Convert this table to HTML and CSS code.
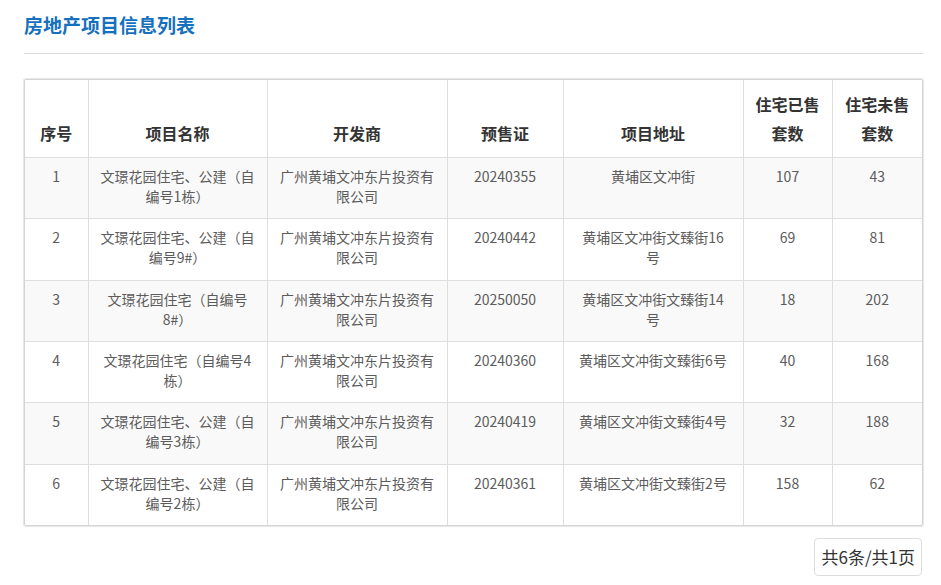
FILE: index.html
```html
<!DOCTYPE html>
<html lang="zh-CN">
<head>
<meta charset="utf-8">
<title>房地产项目信息列表</title>
<link rel="stylesheet" href="styles.css">
</head>
<body>
<div class="page">
  <h1 class="title">房地产项目信息列表</h1>
  <div class="rule"></div>
  <div class="table-wrap">
    <table class="grid">
      <colgroup>
        <col class="c1"><col class="c2"><col class="c3"><col class="c4"><col class="c5"><col class="c6"><col class="c7">
      </colgroup>
      <thead>
        <tr>
          <th>序号</th><th>项目名称</th><th>开发商</th><th>预售证</th><th>项目地址</th><th>住宅已售套数</th><th>住宅未售套数</th>
        </tr>
      </thead>
      <tbody>
        <tr><td>1</td><td>文璟花园住宅、公建（自编号1栋）</td><td>广州黄埔文冲东片投资有限公司</td><td>20240355</td><td>黄埔区文冲街</td><td>107</td><td>43</td></tr>
        <tr><td>2</td><td>文璟花园住宅、公建（自编号9#）</td><td>广州黄埔文冲东片投资有限公司</td><td>20240442</td><td>黄埔区文冲街文臻街16号</td><td>69</td><td>81</td></tr>
        <tr><td>3</td><td>文璟花园住宅（自编号8#）</td><td>广州黄埔文冲东片投资有限公司</td><td>20250050</td><td>黄埔区文冲街文臻街14号</td><td>18</td><td>202</td></tr>
        <tr><td>4</td><td>文璟花园住宅（自编号4栋）</td><td>广州黄埔文冲东片投资有限公司</td><td>20240360</td><td>黄埔区文冲街文臻街6号</td><td>40</td><td>168</td></tr>
        <tr><td>5</td><td>文璟花园住宅、公建（自编号3栋）</td><td>广州黄埔文冲东片投资有限公司</td><td>20240419</td><td>黄埔区文冲街文臻街4号</td><td>32</td><td>188</td></tr>
        <tr><td>6</td><td>文璟花园住宅、公建（自编号2栋）</td><td>广州黄埔文冲东片投资有限公司</td><td>20240361</td><td>黄埔区文冲街文臻街2号</td><td>158</td><td>62</td></tr>
      </tbody>
    </table>
  </div>
  <div class="pager">
    <span class="pager-info">共6条/共1页</span>
  </div>
</div>
</body>
</html>
```
FILE: styles.css
```css
html, body {
  margin: 0;
  padding: 0;
  background: #fff;
}
body {
  font-family: "Noto Sans CJK SC", "Open Sans", sans-serif;
  color: #333;
}
.page {
  padding: 12px 18px 0 24px;
}
.title {
  margin: 0;
  font-size: 19px;
  line-height: 26px;
  font-weight: 700;
  color: #1570bd;
}
.rule {
  margin-top: 15px;
  border-top: 1px solid #dcdcdc;
}
.table-wrap {
  margin-top: 25px;
  border: 1px solid #d4d4d4;
  box-shadow: 0 0 1px 1px #e6e6e6;
  border-radius: 2px;
}
.grid {
  width: 100%;
  border-collapse: collapse;
  table-layout: fixed;
}
.c1 { width: 63px; }
.c2 { width: 179px; }
.c3 { width: 180px; }
.c4 { width: 116px; }
.c5 { width: 180px; }
.c6 { width: 89px; }
.c7 { width: 90px; }
.grid th, .grid td {
  border: 1px solid #dedede;
  text-align: center;
}
.grid tr > :first-child { border-left: 0; }
.grid tr > :last-child { border-right: 0; }
.grid thead tr > * { border-top: 0; }
.grid tbody tr:last-child > * { border-bottom: 0; }
.grid th {
  font-size: 16px;
  font-weight: 700;
  color: #333;
  line-height: 29px;
  padding: 10px 8px 9px;
  height: 58px;
  vertical-align: bottom;
}
.grid td {
  font-size: 14px;
  color: #5c5c5c;
  line-height: 20px;
  padding: 8px 12px 12.33px;
  height: 40px;
  vertical-align: top;
}
.grid tbody tr:nth-child(odd) {
  background: #f9f9f9;
}
.pager {
  display: flex;
  justify-content: flex-end;
  margin-top: 12px;
}
.pager-info {
  display: inline-block;
  border: 1px solid #dcdcdc;
  border-radius: 4px;
  padding: 0 6px;
  height: 36px;
  line-height: 36px;
  font-size: 17px;
  color: #333;
  margin-right: 1px;
}
```
